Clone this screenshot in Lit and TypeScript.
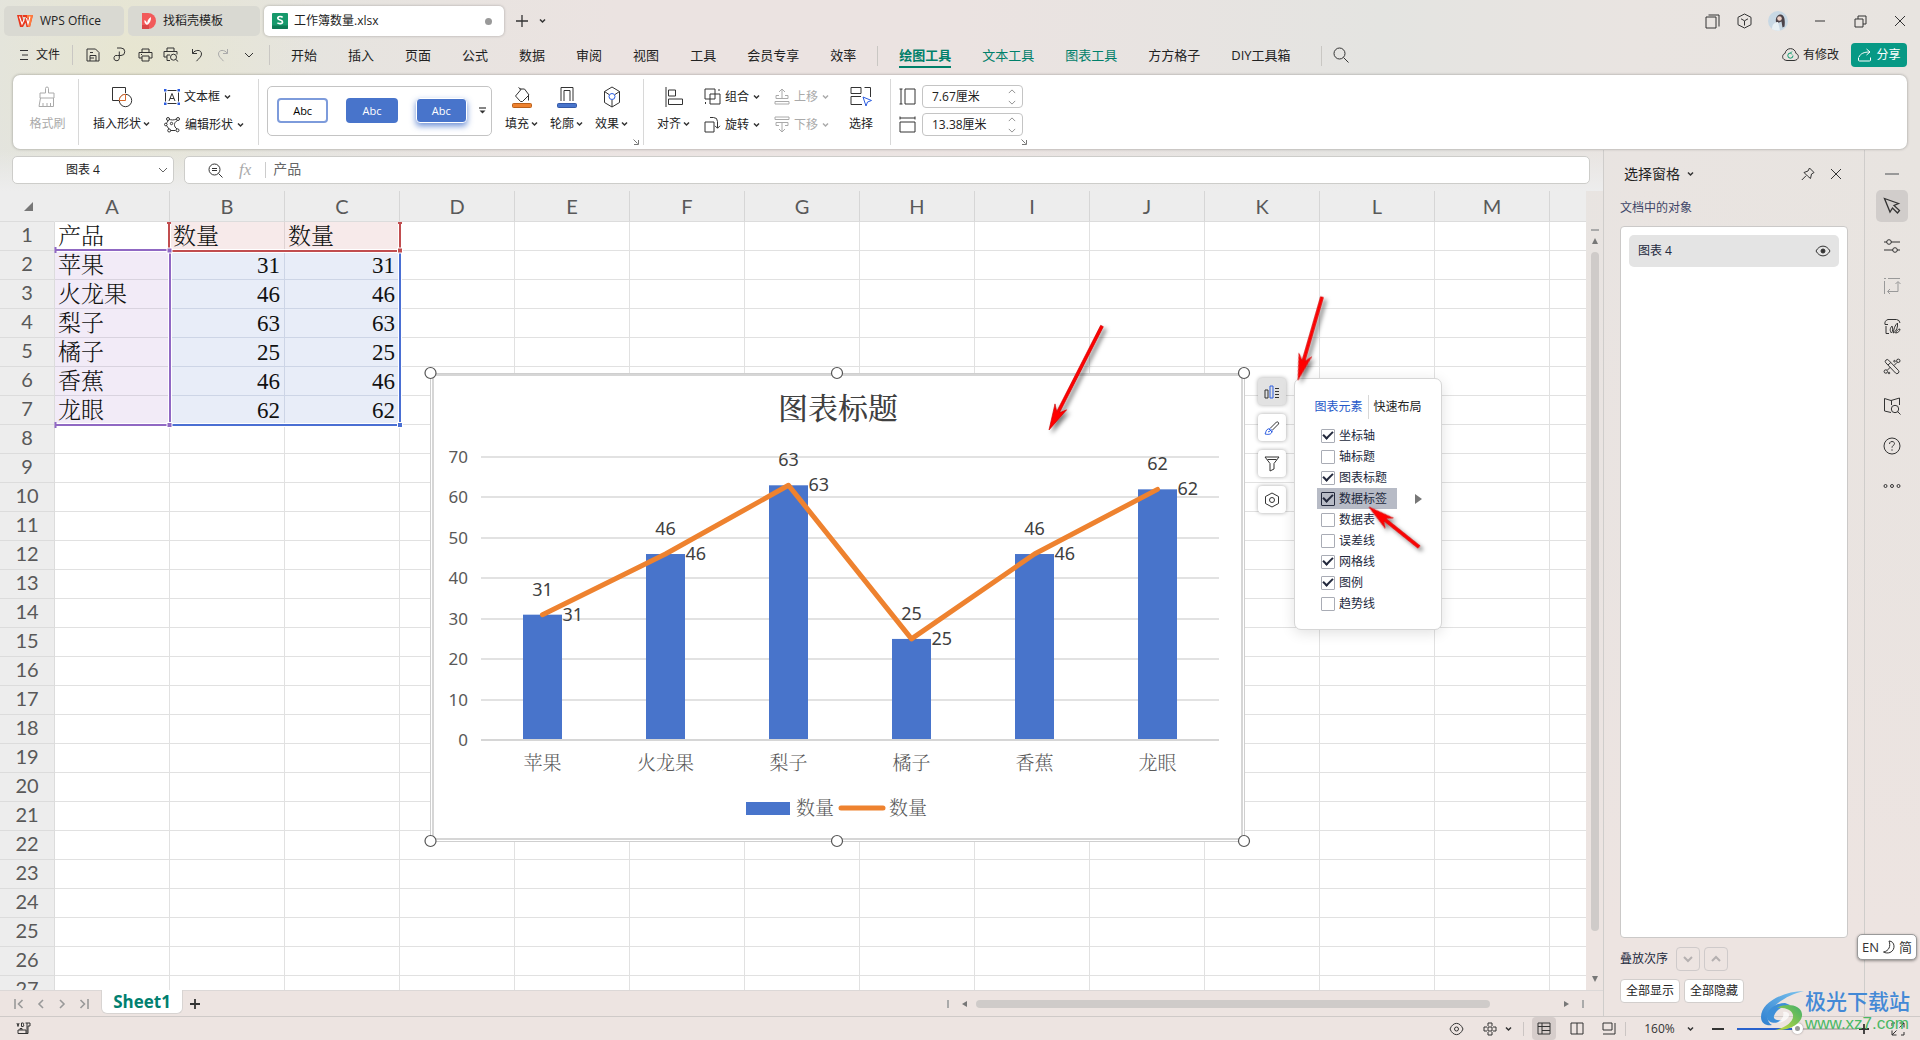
import { LitElement, html, css, svg, nothing } from "lit";
import { customElement, property, state } from "lit/decorators.js";
import { classMap } from "lit/directives/class-map.js";

const INK = "#333";

/* Line icons. Each entry: width, height, drawing. */
const ICONS: Record<string, [number, number, unknown]> = {
  wps: [16, 14, svg`<path d="M0 1h5l1.500 7L9 3H6L5.500 1H16l-3 12H9.500L8.500 8.500 6 13H3Z" fill="#e8391f"/><path d="M10 1h6l-3 12h-2l1.500-9H10Z" fill="#ff7b3d"/><path d="M2.500 2.500 5 10l2-4M9.500 4l1.500 6 2-7.500" stroke="#fff" stroke-width="1.100"/>`],
  docer: [15, 16, svg`<path d="M1 0h6a8 8 0 0 1 0 16H1Z" fill="#f25a5a"/><path d="M1 12h7v4H1Z" fill="#d94646"/><path d="M6 12c0-4 1-6 4-8 0 4-1 6-4 8Zm0 0c-2-1-3-3-2.500-5 2 1 3 3 2.500 5Z" fill="#fff"/>`],
  sheetfile: [16, 16, svg`<rect width="16" height="16" rx="1" fill="#16996b"/><path d="M0 12.500h16V15a1 1 0 0 1-1 1H1a1 1 0 0 1-1-1Z" fill="#0d7a54"/><path d="M10.600 4.400C9.800 3.300 5.800 2.900 5.800 5.200c0 2.300 4.700 1.300 4.700 3.700 0 2.300-4 2.100-5.100.9" stroke="#fff" stroke-width="1.700"/>`],
  plus: [14, 14, svg`<path d="M7 1v12M1 7h12" stroke-width="1.300"/>`],
  plusBold: [10, 10, svg`<path d="M5 0v10M0 5h10" stroke-width="1.800"/>`],
  caret: [7, 6, svg`<path d="m1 1.500 2.500 2.500L6 1.500" stroke-width="1.500"/>`],
  down: [10, 8, svg`<path d="m1 2 4 4 4-4"/>`],
  up: [10, 8, svg`<path d="m1 6 4-4 4 4"/>`],
  downBold: [10, 8, svg`<path d="m1 2 4 4 4-4" stroke-width="2"/>`],
  upBold: [10, 8, svg`<path d="m1 6 4-4 4 4" stroke-width="2"/>`],
  menu: [10, 12, svg`<path d="M1 1.500h8M3 6h6M1 10.500h8"/>`],
  save: [14, 14, svg`<path d="M1 1h8.500L13 4.500V13H1ZM4 13V7.500h6V13M4 4.500h3M4 10h4"/>`],
  loop: [14, 15, svg`<path d="M5 1h4a3.500 3.500 0 0 1 0 7.500H5.500a2.700 2.700 0 1 0 1.800 3V4.500"/>`],
  print: [15, 14, svg`<path d="M4 4V1h7v3M4 10H1V4.500h13V10h-3M4 8h7v5H4ZM3 6.500h1"/>`],
  preview: [16, 15, svg`<path d="M4 4V1h7v3M4 10H1V4.500h13v3M4 13.500h3M4 8v5.500M4 8h3"/><circle cx="10.500" cy="10.200" r="3"/><path d="m12.800 12.500 2.400 2"/>`],
  undo: [12, 14, svg`<path d="M1.500 1v4.500H6M1.700 5.300C4 1.500 10.500 1.200 10.500 6c0 3-3 4.500-5 7.200"/>`],
  redo: [12, 14, svg`<path d="M10.500 1v4.500H6M10.300 5.300C8 1.500 1.500 1.200 1.500 6c0 3 3 4.500 5 7.200"/>`],
  search: [16, 16, svg`<circle cx="6.500" cy="6.500" r="5.500"/><path d="m10.500 10.500 5 5"/>`],
  windows: [15, 15, svg`<path d="M1 3h10v11H1ZM3.500 1H14v11.500"/>`],
  cube: [15, 16, svg`<path d="M7.500 1 14 4.300v7.400L7.500 15 1 11.700V4.300ZM4 5.800l3.500 2L11 5.800M7.500 8v4.500"/>`],
  min: [10, 10, svg`<path d="M0 5h10"/>`],
  restore: [13, 13, svg`<path d="M1 4h8v8H1ZM4 4V1h8v8H9"/>`],
  close: [12, 12, svg`<path d="m1 1 10 10M11 1 1 11"/>`],
  cloud: [17, 15, svg`<path d="M5 13.500C-1 13 0 7 3 6.500 4 0 13 0 14 6.500c3 .5 4 6.500-2 7Z"/><path d="M11 8.500A2.600 2.600 0 1 1 8.500 6m0 0L10 4.500M8.500 6 10 7.500" stroke="#0a9a6c"/>`],
  share: [15, 14, svg`<path d="M9.500 1 13 4 9.500 7M12.800 4C7 4 3.500 5.500 2 9M1.500 9.500V12a1 1 0 0 0 1 1h10a1 1 0 0 0 1-1V9.500" stroke="#fff"/>`],
  brush: [20, 22, svg`<path d="M8.500 7V2.500a1.500 1.500 0 0 1 3 0V7H17v5H3V7ZM3.500 12 2 20.500h14.500V12M6 20.500V17M10 20.500V17M13.500 20.500V17" stroke="#aaa"/>`],
  shapes: [22, 22, svg`<path d="M8 14.500H1.500V1.500h13V7"/><circle cx="14.500" cy="14.500" r="6.200"/><path d="M14.500 8.300v6.200H8.300a6.200 6.200 0 0 1 6.200-6.200Z" stroke="#d9692b" fill="#fff"/>`],
  textbox: [16, 16, svg`<path d="M3.500 1.500h9M3.500 14.500h9M1.500 3.500v9M14.500 3.500v9M5 12 8 4.500 11 12M6 9.500h4"/><path d="M0 0h2.500v2.500H0ZM13.500 0H16v2.500h-2.500ZM0 13.500h2.500V16H0ZM13.500 13.500H16V16h-2.500Z" fill="#2b5ce0" stroke="none"/>`],
  editshape: [17, 17, svg`<path d="M5 3.200c2 1 5 1 7 0M4 5C3 6 3 7 2.200 7.700M2.500 9.500 5 13M6.500 14.500h5M13.500 4.500c-4 2-4 6-.5 8.500"/><circle cx="4" cy="3" r="1.500"/><circle cx="14" cy="3" r="1.500"/><circle cx="1.800" cy="8.500" r="1.300"/><circle cx="5.200" cy="14.500" r="1.500"/><circle cx="13.500" cy="14.300" r="1.500"/><circle cx="7.500" cy="7.500" r="1.200"/>`],
  fill: [20, 22, svg`<path d="M7.500 3h5l4.500 6-6.500 6.500H8.500L3.500 10 9 3.500 6.500 1.500M16.500 9.500v5"/><rect x=".5" y="17.500" width="19" height="4" rx="1" fill="#ee822f" stroke="#b9601c"/>`],
  outline: [20, 22, svg`<path d="M4 15V1.500h12V15M7 15V4.500h6V15"/><rect x=".5" y="17.500" width="19" height="4" rx="1" fill="#4874cb" stroke="#3559a6"/>`],
  effect: [18, 22, svg`<path d="m9 1 7.500 4.500v11L9 21l-7.500-4.500v-11ZM1.500 5.500 6 8.500M16.500 5.500 12 8.500M9 14v7"/><circle cx="9" cy="10.500" r="3" stroke="#2b5ce0"/>`],
  align: [18, 20, svg`<path d="M1 0v20M3.500 3h7v6h-7ZM3.500 12h14v5.500h-14Z"/>`],
  group: [17, 17, svg`<path d="M1 1h10v10H1ZM6 6h10v10H6ZM14 2h2M1.500 14v2"/>`],
  rotate: [17, 17, svg`<path d="M1 6h9v10H1ZM6 1.500h3.500a4 4 0 0 1 4 4V12M11 9.800l2.500 2.500L16 9.800"/>`],
  moveup: [16, 17, svg`<path d="M8 1v9M5 4l3-3 3 3M2 10.500V7.500h3M11 7.500h3v3H2M1 13.500h14V16H1Z" stroke="#aaa"/>`],
  movedown: [16, 17, svg`<path d="M8 7v9M5 13l3 3 3-3M5 9.500H2V6.500h12v3h-3M1 1h14v2.500H1Z" stroke="#aaa"/>`],
  select: [22, 21, svg`<path d="M1 7.500v-6h10v6H1ZM14.500 1.500h6V11M12 18.500H1v-8h10"/><path d="m13 11 8.500 3.500-4 1.500-1.500 4Z" stroke="#2b5ce0"/>`],
  heightIcon: [17, 17, svg`<path d="M2 1v15M.5 1h3M.5 16h3M6 1h10v15H6Z"/>`],
  widthIcon: [17, 17, svg`<path d="M1 2h15M1 .5v3M16 .5v3M1 6h15v10H1Z"/>`],
  launcher: [6, 6, svg`<path d="m.5.500 4 4M5.500 1v4.500H1"/>`],
  more: [7, 7, svg`<path d="M0 1h7" stroke-width="1.200"/><path d="m.5 3.500 3 3 3-3Z" fill="#333" stroke="none"/>`],
  zoomout: [15, 15, svg`<circle cx="6.500" cy="6.500" r="5.500"/><path d="m10.500 10.500 4 4M4 5.500h5M4 7.500h5"/>`],
  pin: [14, 14, svg`<path d="M8.500 1 13 5.500 10.500 7l-1 4.500L6.500 9 3 5.500 7 4ZM5 8.800.8 13"/>`],
  eye: [16, 12, svg`<path d="M1 6c3.500-6.500 10.500-6.500 14 0-3.500 6.500-10.500 6.500-14 0Z"/><circle cx="8" cy="6" r="2" fill="#333"/>`],
  dash: [14, 4, svg`<path d="M0 2h14" stroke="#999" stroke-width="2"/>`],
  pointer: [18, 18, svg`<path d="m1.500 1.500 14 5-4.500 2 5.500 5-2 2.500L9.500 11l-2.500 4Z" stroke-width="1.300"/>`],
  sliders: [18, 16, svg`<path d="M1 4h3M8 4h9M1 12h9M14 12h3"/><circle cx="6" cy="4" r="2.300"/><circle cx="12" cy="12" r="2.300"/>`],
  crop: [18, 18, svg`<path d="M1 1.500h2M5 1.500h12M1.500 4v13M15 5v9.500H5M12.500 7 15 4.500 17.500 7M7 12l-2.500 2.500L7 17" stroke="#999"/>`],
  style: [18, 17, svg`<path d="M5 6.500H2a4 4 0 0 1 3-5h8.500a4 4 0 0 1 3.500 3.500M3 8v7.500h3M8.500 15c-2-2-1.500-5 .5-7 1 3 1 5-.5 7Zm2 0c0-4 1.500-8 4-10 .500 4-1 8-4 10Zm2 0c1-2 2.500-4 4.500-4 0 2-2 4-4.500 4Z"/>`],
  tools: [18, 17, svg`<path d="M2.800 4.800 12.500 15a1.900 1.900 0 0 0 2.900-2.600L5.600 2.200a1.900 1.900 0 0 0-2.800 2.600ZM5 7l2.800-2.500M11 7.500l3.200-3.200M4.500 12l3-3"/><circle cx="15.300" cy="2.800" r="1.700"/><circle cx="2.800" cy="13.500" r="1.700"/><circle cx="11.500" cy="3.200" r=".8"/><circle cx="6" cy="15" r=".8"/>`],
  book: [18, 18, svg`<path d="M8 15.500 1.500 14V1.500L8 3.500 16.500 1v7M8.500 3.500V8"/><circle cx="12" cy="12" r="3.700"/><path d="m14.500 14.500 3 3"/>`],
  help: [18, 18, svg`<circle cx="9" cy="9" r="8"/><path d="M6.500 7c0-3.500 5-3 5-.5 0 2-2.500 1.800-2.500 4.200M9 12.300v1.400"/>`],
  dots: [18, 6, svg`<circle cx="2.500" cy="3" r="1.500"/><circle cx="9" cy="3" r="1.500"/><circle cx="15.500" cy="3" r="1.500"/>`],
  first: [10, 12, svg`<path d="M1 1v10M8.500 2 4.500 6l4 4" stroke="#999" stroke-width="1.600"/>`],
  prev: [8, 12, svg`<path d="M6 2 2 6l4 4" stroke="#999" stroke-width="1.600"/>`],
  next: [8, 12, svg`<path d="m2 2 4 4-4 4" stroke="#999" stroke-width="1.600"/>`],
  last: [10, 12, svg`<path d="M9 1v10M1.500 2l4 4-4 4" stroke="#999" stroke-width="1.600"/>`],
  macro: [15, 13, svg`<path d="M1 1l1 3.500L3 1M5.500 1v3.500H7c1 0 1-1.800 0-1.800 1 0 1-1.700 0-1.700ZM9.500 1H14v3h-2v7.500H2V8h8v3M4 8V6.500h2V8M11 1v10"/>`],
  chartEl: [16, 14, svg`<path d="M1 5h3v8H1ZM11 3.500h4M11 6.500h4M11 9.500h4M11 12.500h4"/><path d="M6 1h3v12H6Z" stroke="#2b5ce0"/>`],
  paint: [16, 16, svg`<path d="m6.500 8 6-6a1.500 1.500 0 0 1 2 2l-6 6"/><path d="M1 14c1-1 .500-4 3-5 2-1 5 1 4 3-1 3-5 2.500-7 2ZM5 9l3 3M4 12l2-1" stroke="#2b5ce0"/>`],
  funnel: [16, 16, svg`<path d="M1 1h14l-5 6.500V13l-4 2V7.500ZM3.500 3.500h9"/>`],
  gearhex: [16, 16, svg`<path d="m8 1 6.500 3.500v7L8 15l-6.500-3.500v-7Z"/><circle cx="8" cy="8" r="2.500"/>`],
  eyecare: [15, 14, svg`<path d="M1 7c3-7.500 10-7.500 13 0-3 7.500-10 7.500-13 0Z"/><circle cx="7.500" cy="7" r="2"/>`],
  flower: [14, 14, svg`<path d="M5 4V1h4v3M5 10v3h4v-3M4 5H1v4h3M10 5h3v4h-3M5 5h4v4H5Z"/>`],
  viewNormal: [14, 13, svg`<path d="M1 1h12v11H1ZM1 4.500h12M5 1v11M5 8.500h8"/>`],
  viewPage: [14, 13, svg`<path d="M1 1h12v11H1ZM7 1v11"/>`],
  viewBreak: [14, 13, svg`<path d="M1 1h9v7H1ZM13 1v11H1"/>`],
  full: [14, 14, svg`<path d="M8.500 1H13v4.500M13 1 8.500 5.500M5.500 13H1V8.500M1 13l4.500-4.500M1 4V1h3M13 10v3h-3"/>`],
  minus: [12, 4, svg`<path d="M0 2h12" stroke-width="2"/>`],
  moon: [14, 14, svg`<path d="M7 1c6 0 7 9 1 11.500-2 .8-5 .5-6.500-.5C7 11 9 6 7 1Z"/>`],
};

const icon = (name: string, stroke = INK) => {
  const [w, h, body] = ICONS[name];
  return html`<svg width=${w} height=${h} viewBox="0 0 ${w} ${h}" fill="none" stroke=${stroke} aria-hidden="true">${body}</svg>`;
};

const base = css`
  * { box-sizing: border-box; }
  svg { display: block; flex: none; }
  button, input, a {
    font: inherit; color: inherit; background: none; border: 0; padding: 0; margin: 0;
    text-decoration: none; outline: 0;
  }
  button { display: inline-flex; align-items: center; justify-content: center; white-space: nowrap; }
`;

@customElement("title-bar")
class TitleBar extends LitElement {
  static styles = [base, css`
    :host { display: flex; align-items: center; height: 38px; padding: 4px 0 0 4px; }
    .tab { height: 30px; border-radius: 5px; background: #d9d9d2; display: flex; align-items: center; gap: 7px; padding: 0 13px; margin-right: 4px; justify-content: flex-start; }
    .home { width: 120px; }
    .docer { width: 132px; }
    .doc { width: 240px; background: #fff; box-shadow: 0 0 3px rgba(0,0,0,.28); padding: 0 8px; gap: 6px; }
    .dot { width: 7px; height: 7px; border-radius: 50%; background: #999; margin-left: auto; margin-right: 4px; }
    .add { margin-left: 7px; gap: 10px; }
    .win { margin-left: auto; display: flex; align-items: center; }
    .win button { width: 40px; height: 28px; }
    .win .near { width: 32px; }
    .win .user { width: 32px; margin: 0 6px 0 2px; }
  `];
  render() {
    return html`
      <a class="tab home" href="#home">${icon("wps", "none")}<span>WPS Office</span></a>
      <a class="tab docer" href="#docer">${icon("docer", "none")}<span>找稻壳模板</span></a>
      <a class="tab doc" href="#doc">${icon("sheetfile", "none")}<span>工作簿数量.xlsx</span><span class="dot"></span></a>
      <button class="add" aria-label="新建">${icon("plus")}${icon("caret")}</button>
      <div class="win">
        <button class="near" aria-label="窗口">${icon("windows")}</button>
        <button class="near" aria-label="应用">${icon("cube")}</button>
        <button class="user" aria-label="账号">
          <svg width="20" height="20" viewBox="0 0 20 20"><circle cx="10" cy="10" r="10" fill="#c8d8e4"/><path d="M12 3.500c4 0 5.500 4 4.500 12l-2 1-1-6-5 2C7 10 8 4 12 3.500Z" fill="#4a4248"/><circle cx="11.500" cy="7.500" r="2.300" fill="#eccfc4"/><path d="M4 18c0-5 3-7 6-7l2 8.500c-3 .500-6 0-8-1.500Z" fill="#e8f0f4"/></svg>
        </button>
        <button aria-label="最小化">${icon("min")}</button>
        <button aria-label="还原">${icon("restore")}</button>
        <button aria-label="关闭">${icon("close")}</button>
      </div>`;
  }
}

@customElement("menu-bar")
class MenuBar extends LitElement {
  static styles = [base, css`
    :host { display: flex; align-items: center; height: 37px; padding: 0 13px 4px 19px; }
    .file { gap: 7px; }
    .sep { width: 1px; height: 20px; background: #c9c7c3; margin: 0 12px; }
    .quick { display: flex; margin: 0 -5px; }
    .quick button { width: 26px; height: 26px; }
    nav { display: flex; gap: 31px; font-size: 13px; margin: 3px 0 0 9px; align-items: center; }
    nav a { line-height: 22px; white-space: nowrap; border-bottom: 2px solid transparent; }
    nav .tool { color: #00806a; }
    nav .on { font-weight: 700; border-color: #00806a; }
    nav .bar { width: 1px; height: 20px; background: #c9c7c3; margin: 0 -10px; }
    nav .bar:last-child { margin-left: -1px; }
    .find { margin-left: 21px; }
    .right { margin-left: auto; display: flex; align-items: center; gap: 12px; }
    .sync { gap: 4px; }
    .share { height: 24px; width: 56px; border-radius: 4px; background: #079985; color: #fff; gap: 4px; }
  `];
  render() {
    const main = ["开始", "插入", "页面", "公式", "数据", "审阅", "视图", "工具", "会员专享", "效率"];
    return html`
      <button class="file">${icon("menu")}<span>文件</span></button>
      <span class="sep"></span>
      <div class="quick">
        ${["save", "loop", "print", "preview", "undo"].map((n) => html`<button aria-label=${n}>${icon(n)}</button>`)}
        <button aria-label="redo">${icon("redo", "#aaa")}</button>
        <button aria-label="more">${icon("down")}</button>
      </div>
      <span class="sep"></span>
      <nav>
        ${main.map((t) => html`<a href="#tab">${t}</a>`)}
        <span class="bar"></span>
        <a class="tool on" href="#tab">绘图工具</a>
        <a class="tool" href="#tab">文本工具</a>
        <a class="tool" href="#tab">图表工具</a>
        <a href="#tab">方方格子</a>
        <a href="#tab">DIY工具箱</a>
        <span class="bar"></span>
      </nav>
      <button class="find" aria-label="搜索">${icon("search")}</button>
      <div class="right">
        <button class="sync">${icon("cloud")}<span>有修改</span></button>
        <button class="share">${icon("share")}<span>分享</span></button>
      </div>`;
  }
}

@customElement("ribbon-bar")
class RibbonBar extends LitElement {
  static styles = [base, css`
    :host { display: flex; height: 74px; margin: 0 13px 1px; background: #fff; border-radius: 7px; box-shadow: 0 0 3px rgba(0,0,0,.35); position: relative; z-index: 2; padding: 4px 0; }
    .group { display: flex; align-items: center; position: relative; border-right: 1px solid #d8d8d8; padding: 0 10px 3px; }
    .group:last-child { border: 0; }
    .big { flex-direction: column; gap: 6px; height: 56px; justify-content: flex-start; padding-top: 3px; }
    .big .pic { height: 22px; display: flex; align-items: center; }
    .lbl { display: flex; align-items: center; gap: 2px; line-height: 20px; }
    .stack { display: flex; flex-direction: column; gap: 8px; }
    .stack button { height: 20px; gap: 4px; justify-content: flex-start; }
    .off { color: #aaa; }
    .g1 { width: 66px; justify-content: center; padding-left: 14px; }
    .g2 { width: 180px; gap: 14px; padding-left: 14px; }
    .g3 { width: 385px; gap: 12px; padding-left: 8px; padding-right: 0; }
    .g4 { width: 247px; gap: 14px; padding-left: 13px; }
    .g5 { width: 140px; gap: 6px; padding-left: 8px; }
    .pick { margin-left: 6px; }
    .gallery { display: flex; align-items: center; width: 225px; height: 50px; border: 1px solid #c4c4c4; border-radius: 5px; padding: 0 5px 0 9px; gap: 18px; margin-right: 1px; font-size: 11px; }
    .sample { width: 52px; height: 25px; border-radius: 4px; background: #4874cb; color: #fff; }
    .gallery .plain { background: #fff; color: #000; border: 2px solid #7d9bdb; }
    .gallery .raised { border: 1px solid #fff; box-shadow: 0 3px 6px rgba(72,116,203,.8); }
    .gallery .more { margin-left: -6px; }
    .corner { position: absolute; right: 4px; bottom: 0; }
    .sizes { display: flex; flex-direction: column; gap: 5px; }
    .sizes label { display: flex; align-items: center; gap: 6px; }
    .num { display: flex; align-items: center; width: 101px; height: 23px; border: 1px solid #c4c4c4; border-radius: 4px; padding: 0 4px 0 9px; }
    .num input { width: 76px; font-size: 12px; }
    .spin { display: flex; flex-direction: column; gap: 4px; }
    .spin svg { width: 8px; height: 7px; }
  `];
  big(name: string, text: string, caret = true, extra = "") {
    return html`<button class="big ${extra}"><span class="pic">${icon(name)}</span><span class="lbl">${text}${caret ? icon("caret") : nothing}</span></button>`;
  }
  row(name: string, text: string, off = false) {
    return html`<button class=${off ? "off" : ""}>${icon(name)}<span>${text}</span>${icon("caret", off ? "#aaa" : INK)}</button>`;
  }
  size(name: string, text: string, value: string) {
    return html`<label>${icon(name)}<span class="num"><input aria-label=${text} .value=${value} /><span class="spin">${icon("up", "#777")}${icon("down", "#777")}</span></span></label>`;
  }
  render() {
    return html`
      <div class="group g1">${this.big("brush", "格式刷", false, "off")}</div>
      <div class="group g2">
        ${this.big("shapes", "插入形状")}
        <div class="stack">${this.row("textbox", "文本框")}${this.row("editshape", "编辑形状")}</div>
      </div>
      <div class="group g3">
        <div class="gallery">
          <button class="sample plain">Abc</button><button class="sample">Abc</button><button class="sample raised">Abc</button>
          <button class="more" aria-label="更多样式">${icon("more")}</button>
        </div>
        ${this.big("fill", "填充")}${this.big("outline", "轮廓")}${this.big("effect", "效果")}
        <span class="corner">${icon("launcher", "#777")}</span>
      </div>
      <div class="group g4">
        ${this.big("align", "对齐")}
        <div class="stack">${this.row("group", "组合")}${this.row("rotate", "旋转")}</div>
        <div class="stack">${this.row("moveup", "上移", true)}${this.row("movedown", "下移", true)}</div>
        ${this.big("select", "选择", false, "pick")}
      </div>
      <div class="group g5">
        <div class="sizes">${this.size("heightIcon", "高度", "7.67厘米")}${this.size("widthIcon", "宽度", "13.38厘米")}</div>
        <span class="corner">${icon("launcher", "#777")}</span>
      </div>`;
  }
}

const CATEGORIES = ["苹果", "火龙果", "梨子", "橘子", "香蕉", "龙眼"];
const VALUES = [31, 46, 63, 25, 46, 62];

@customElement("chart-object")
class ChartObject extends LitElement {
  static styles = [base, css`
    :host { display: block; }
    text { font-family: "Noto Sans", "Open Sans", "Noto Sans CJK SC", sans-serif; fill: #404040; }
    .title { font-family: "Noto Serif CJK SC", "Noto Sans CJK SC", serif; font-size: 30px; font-weight: 500; text-anchor: middle; }
    .axis { font-size: 17px; fill: #595959; text-anchor: end; }
    .cat { font-family: "Noto Serif CJK SC", "Noto Sans CJK SC", serif; font-size: 19px; font-weight: 300; fill: #595959; text-anchor: middle; }
    .key { font-family: "Noto Serif CJK SC", "Noto Sans CJK SC", serif; font-size: 19px; font-weight: 300; fill: #595959; }
    .val { font-size: 18px; }
    .mid { text-anchor: middle; }
  `];
  render() {
    const left = 61, right = 799, bottom = 377, unit = 283 / 70, step = 123;
    const x = (i: number) => left + step * i + step / 2;
    const y = (v: number) => bottom - v * unit;
    return html`<svg width="836" height="490" viewBox="0 0 836 490" role="img" aria-label="图表标题">
      <rect x="10.500" y="10.500" width="814" height="468" fill="#fff" stroke="#cfcfcf" />
      <rect x="13" y="12" width="809" height="464" fill="#fff" stroke="#d6d6d6" stroke-width="2" />
      ${[0, 10, 20, 30, 40, 50, 60, 70].map((t) => svg`
        <line x1=${left} x2=${right} y1=${Math.round(y(t))} y2=${Math.round(y(t))} stroke=${t ? "#e2e2e2" : "#d6d6d6"} stroke-width="2" />
        <text class="axis" x="48" y=${Math.round(y(t)) + 6}>${t}</text>`)}
      ${VALUES.map((v, i) => svg`
        <rect x=${x(i) - 19.5} y=${y(v)} width="39" height=${bottom - 1 - y(v)} fill="#4874cb" />
        <text class="cat" x=${x(i)} y=${bottom + 30}>${CATEGORIES[i]}</text>`)}
      <polyline points=${VALUES.map((v, i) => `${x(i)},${y(v)}`).join(" ")} fill="none" stroke="#ee822f" stroke-width="5" stroke-linecap="round" stroke-linejoin="round" />
      ${VALUES.map((v, i) => svg`
        <text class="val mid" x=${x(i)} y=${y(v) - 19}>${v}</text>
        <text class="val" x=${x(i) + 20} y=${y(v) + 6}>${v}</text>`)}
      <text class="title" x="418" y="56">图表标题</text>
      <rect x="326" y="439" width="44" height="13" fill="#4874cb" />
      <text class="key" x="376" y="452">数量</text>
      <line x1="421" x2="463" y1="445" y2="445" stroke="#ee822f" stroke-width="5" stroke-linecap="round" />
      <text class="key" x="469" y="452">数量</text>
      ${[10, 478].map((cy) => [10.5, 417, 824].map((cx) => svg`<circle cx=${cx} cy=${cy} r="5.500" fill="#fff" stroke="#555" stroke-width="1.200" />`))}
    </svg>`;
  }
}

@customElement("chart-tools")
class ChartTools extends LitElement {
  static styles = [base, css`
    :host { display: flex; align-items: flex-start; gap: 8px; }
    .strip { display: flex; flex-direction: column; gap: 9px; }
    .strip button { width: 28px; height: 27px; border-radius: 4px; background: #fff; box-shadow: 0 0 4px rgba(0,0,0,.35); }
    .strip .on { background: #e2e2e2; }
    .panel { width: 148px; background: #fff; border: 1px solid #d6d6d6; border-radius: 7px; box-shadow: 0 3px 14px rgba(0,0,0,.12); padding: 16px 0 15px; }
    .tabs { display: flex; justify-content: center; height: 24px; margin-bottom: 6px; }
    .tabs button { padding: 0 5px; }
    .tabs .on { color: #2458c9; border-right: 1px solid #d8d8d8; }
    ul { list-style: none; margin: 0; padding: 0; }
    li { display: flex; align-items: center; height: 21px; padding-left: 22px; }
    label { display: flex; align-items: center; height: 21px; gap: 4px; padding: 0 10px 0 4px; color: #23293d; }
    .hot { background: #b7bbc6; }
    input { appearance: none; width: 14px; height: 14px; border: 1px solid #a9acb5; border-radius: 1px; background: #fff; display: grid; place-items: center; }
    .hot input { border-color: #23293d; background: #b7bbc6; }
    input:checked::after { content: ""; width: 8px; height: 4px; border: solid #23293d; border-width: 0 0 2px 2px; transform: rotate(-45deg); margin-bottom: 3px; }
    .tri { margin-left: 18px; border: solid transparent; border-width: 5px 0 5px 7px; border-left-color: #777; }
  `];
  @state() items: [string, boolean][] = [["坐标轴", true], ["轴标题", false], ["图表标题", true], ["数据标签", true], ["数据表", false], ["误差线", false], ["网格线", true], ["图例", true], ["趋势线", false]];
  render() {
    return html`
      <div class="strip">
        <button class="on" aria-label="图表元素">${icon("chartEl")}</button>
        <button aria-label="图表样式">${icon("paint")}</button>
        <button aria-label="图表筛选器">${icon("funnel")}</button>
        <button aria-label="设置图表区域格式">${icon("gearhex")}</button>
      </div>
      <div class="panel">
        <div class="tabs"><button class="on">图表元素</button><button>快速布局</button></div>
        <ul>${this.items.map(([name, on], i) => html`<li>
          <label class=${classMap({ hot: i === 3 })}><input type="checkbox" .checked=${on} /><span>${name}</span></label>
          ${i === 3 ? html`<span class="tri"></span>` : nothing}</li>`)}</ul>
      </div>`;
  }
}

@customElement("sheet-grid")
class SheetGrid extends LitElement {
  static styles = [base, css`
    :host { display: block; position: relative; overflow: hidden; background: #ededed; }
    table { border-collapse: separate; border-spacing: 0; table-layout: fixed; width: 1665px; background: #fff; }
    .corner-col { width: 55px; }
    .data-col { width: 115px; }
    th { font: 400 20px/24px Lato, sans-serif; color: #595959; background: #ededed; padding: 0; border: solid #dcdcdc; border-width: 0 1px 1px 0; }
    thead th { height: 31px; border-right-color: #d6d6d6; }
    thead .corner { border-right-color: #ededed; }
    thead .last { border-right: 0; }
    tbody th { height: 29px; padding-bottom: 4px; }
    td { font: 23px/27px "Liberation Serif", "Noto Serif CJK SC", "Noto Sans CJK SC", serif; color: #111; height: 29px; padding: 0 4px 0 3px; border: solid #e1e1e1; border-width: 0 1px 1px 0; overflow: hidden; white-space: nowrap; }
    .cn { font-weight: 300; }
    .num { text-align: right; }
    .red { background: #f7eaea; border-color: #dfd3d3; }
    .purple { background: #f2ebf7; border-color: #d9d3df; }
    .blue { background: #e8edf8; border-color: #cdd5e6; }
    .tri { display: block; width: 0; margin: 0 0 0 24px; border: solid transparent; border-width: 0 0 9px 9px; border-bottom-color: #777; }
    .ranges { position: absolute; left: 0; top: 0; }
    .chart { position: absolute; left: 420px; top: 172px; }
    .tools { position: absolute; left: 1258px; top: 187px; }
    .arrows { position: absolute; left: 1030px; top: 89px; pointer-events: none; }
  `];
  cell(r: number, c: number) {
    if (r > 6 || c > 2) return html`<td></td>`;
    if (r === 0) return html`<td class=${c ? "cn red" : "cn"}>${c ? "数量" : "产品"}</td>`;
    return c ? html`<td class="num blue">${VALUES[r - 1]}</td>` : html`<td class="cn purple">${CATEGORIES[r - 1]}</td>`;
  }
  arrow(x1: number, y1: number, x2: number, y2: number) {
    const len = Math.hypot(x2 - x1, y2 - y1);
    const ang = (Math.atan2(y2 - y1, x2 - x1) * 180) / Math.PI;
    return svg`<path transform="translate(${x1} ${y1}) rotate(${ang})" d="M0 -1.500 L${len - 20} -1.500 L${len - 26} -6.500 L${len} 0 L${len - 26} 6.500 L${len - 20} 1.500 L0 1.500 Z" fill="#f00" stroke="#c00" stroke-width=".6" />`;
  }
  render() {
    const cols = [..."ABCDEFGHIJKLM", ""];
    const edge = (d: string, c: string) => svg`<path d=${d} stroke="#fff" stroke-width="4" /><path d=${d} stroke=${c} stroke-width="2" />`;
    const knob = (x: number, y: number, c: string) => svg`<rect x=${x - 2.5} y=${y - 2.5} width="5" height="5" fill=${c} stroke="#fff" />`;
    return html`
      <table>
        <colgroup><col class="corner-col" />${cols.map(() => html`<col class="data-col" />`)}</colgroup>
        <thead><tr><th class="corner" aria-label="全选"><span class="tri"></span></th>${cols.map((c) => html`<th class=${c ? "" : "last"}>${c}</th>`)}</tr></thead>
        <tbody>${Array.from({ length: 27 }, (_, r) => html`<tr><th>${r + 1}</th>${cols.map((_c, c) => this.cell(r, c))}</tr>`)}</tbody>
      </table>
      <svg class="ranges" width="406" height="240" viewBox="0 0 406 240" fill="none">
        ${edge("M400 60V234H170", "#4a6fd3")}
        ${edge("M169 32V60H400V32", "#c14d4f")}
        ${edge("M56 59H170V234H56", "#9068c3")}
        <path d="M55.500 56v6M55.500 231v6" stroke="#9068c3" stroke-width="2" />
        <path d="M167 32h4M398 32h4" stroke="#c14d4f" stroke-width="2" />
        ${knob(169.5, 59.5, "#9068c3")}${knob(169.5, 234, "#9068c3")}${knob(400, 59.5, "#c14d4f")}${knob(400, 234, "#4a6fd3")}
      </svg>
      <chart-object class="chart"></chart-object>
      <chart-tools class="tools"></chart-tools>
      <svg class="arrows" width="410" height="290" viewBox="0 0 410 290">
        <defs><filter id="s" x="-40%" y="-40%" width="180%" height="180%"><feDropShadow dx="3" dy="3" stdDeviation="2" flood-opacity=".5" /></filter></defs>
        <g filter="url(#s)">
          ${this.arrow(72, 46, 19, 150)}${this.arrow(292, 17, 268, 100)}${this.arrow(389, 267, 339, 227)}
        </g>
      </svg>`;
  }
}

@customElement("side-pane")
class SidePane extends LitElement {
  static styles = [base, css`
    :host { display: flex; flex-direction: column; width: 261px; border-left: 1px solid #cfcdcb; padding: 14px 16px 13px; }
    header { display: flex; align-items: center; height: 20px; padding-left: 4px; font-size: 14px; }
    header .name { gap: 7px; }
    header .pin { margin-left: auto; margin-right: 15px; }
    header .x { margin-right: 6px; }
    .sub { color: #3f4668; line-height: 18px; margin: 15px 0 9px; }
    .list { flex: 1; background: #fff; border: 1px solid #cbc9c8; border-radius: 4px; padding: 8px; margin: 0; list-style: none; }
    .list li { display: flex; align-items: center; justify-content: space-between; height: 32px; background: #e4e4e4; border-radius: 5px; padding: 0 8px 0 9px; color: #23293d; }
    .order, .all { display: flex; align-items: center; gap: 4px; }
    .order { margin: 9px 0 8px; color: #23293d; }
    .order span { margin-right: 4px; }
    .order button { width: 24px; height: 24px; border: 1px solid #cfcaca; border-radius: 4px; }
    .all button { width: 60px; height: 24px; background: #fff; border: 1px solid #d2cecc; border-radius: 4px; color: #222; }
  `];
  render() {
    return html`
      <header><button class="name"><span>选择窗格</span>${icon("caret")}</button>
        <button class="pin" aria-label="固定">${icon("pin")}</button><button class="x" aria-label="关闭">${icon("close")}</button></header>
      <div class="sub">文档中的对象</div>
      <ul class="list"><li><span>图表 4</span><button aria-label="可见">${icon("eye")}</button></li></ul>
      <div class="order"><span>叠放次序</span><button aria-label="下移一层">${icon("downBold", "#b5b0b0")}</button><button aria-label="上移一层">${icon("upBold", "#b5b0b0")}</button></div>
      <div class="all"><button>全部显示</button><button>全部隐藏</button></div>`;
  }
}

@customElement("side-rail")
class SideRail extends LitElement {
  static styles = [base, css`
    :host { display: flex; flex-direction: column; align-items: center; width: 56px; border-left: 1px solid #cfcdcb; padding: 16px 2px 0 0; }
    button { width: 32px; height: 32px; border-radius: 5px; margin-bottom: 8px; }
    .fold { height: 16px; }
    .on { background: #d1cdcb; }
  `];
  render() {
    return html`<button class="fold" aria-label="收起">${icon("dash")}</button>
      ${["pointer", "sliders", "crop", "style", "tools", "book", "help", "dots"].map((n, i) => html`<button class=${i ? "" : "on"} aria-label=${n}>${icon(n)}</button>`)}`;
  }
}

@customElement("status-bar")
class StatusBar extends LitElement {
  static styles = [base, css`
    :host { display: flex; align-items: center; height: 24px; border-top: 1px solid #cfcac8; padding: 0 6px 0 16px; }
    .end { margin-left: auto; display: flex; align-items: center; }
    .end button { height: 23px; width: 32px; }
    .end .flower { gap: 8px; margin: 0 10px 0 9px; }
    .sep { width: 1px; height: 14px; background: #cbc5c3; }
    .end .on { background: #d6cdcb; border-radius: 4px; width: 24px; margin: 0 5px 0 8px; }
    .zoom { font-size: 12px; gap: 12px; color: #333; }
    .end .zoom { width: 60px; margin: 0 9px 0 13px; }
    .end .step { width: 20px; }
    .end .plus { width: 14px; }
    input { appearance: none; width: 120px; height: 16px; margin: 0 0 0 9px; }
    input::-webkit-slider-runnable-track { height: 2px; background: linear-gradient(90deg, #2a62cc 50%, #c0b9b7 50%); }
    input::-webkit-slider-thumb { appearance: none; width: 11px; height: 11px; margin-top: -5px; border-radius: 50%; background: #999; border: 3px solid #fff; box-shadow: 0 0 2px rgba(0,0,0,.4); }
    .end .full { margin-left: 11px; }
  `];
  render() {
    return html`<button aria-label="宏">${icon("macro")}</button>
      <div class="end">
        <button aria-label="护眼">${icon("eyecare")}</button>
        <button class="flower" aria-label="聚光灯">${icon("flower")}${icon("caret")}</button>
        <span class="sep"></span>
        <button class="on" aria-label="普通视图">${icon("viewNormal")}</button>
        <button aria-label="页面布局">${icon("viewPage")}</button>
        <button aria-label="分页预览">${icon("viewBreak")}</button>
        <span class="sep"></span>
        <button class="zoom">160%${icon("caret")}</button>
        <button class="step" aria-label="缩小">${icon("minus")}</button>
        <input type="range" aria-label="缩放" min="0" max="100" .value=${"50"} />
        <button class="step plus" aria-label="放大">${icon("plusBold")}</button>
        <button class="full" aria-label="全屏">${icon("full")}</button>
      </div>`;
  }
}

@customElement("app-root")
class AppRoot extends LitElement {
  @property() sheet = "Sheet1";
  static styles = [base, css`
    :host {
      display: flex; flex-direction: column; height: 100vh; position: relative; overflow: hidden;
      font: 12px/18px "Open Sans", "Noto Sans CJK SC", sans-serif; color: #222;
      background:
        radial-gradient(circle at 7% 5%, rgba(232,230,205,.8), transparent 9%),
        linear-gradient(90deg, #e3e4df 0%, #e5e4df 14%, #ebe3e1 32%, #ebe3e1 50%, #e4e4e1 72%, #e9e4e1 85%, #e8e4e0 100%);
    }
    .body { display: flex; flex: 1; min-height: 0; background: linear-gradient(180deg, transparent 0, rgba(236,227,225,.4) 50%, #ede4e1 90%); }
    status-bar { background: #ede4e1; }
    .work { flex: 1; min-width: 0; display: flex; flex-direction: column; }
    .formula { display: flex; gap: 10px; padding: 6px 13px 8px 12px; height: 41px; background: linear-gradient(180deg, transparent, #ededed); }
    .name, .expr { display: flex; align-items: center; background: #fff; border: 1px solid #cdcdca; border-radius: 5px; height: 28px; }
    .name { width: 162px; padding: 0 5px; }
    .name input { flex: 1; min-width: 0; text-align: center; padding-right: 10px; font-size: 12px; }
    .expr { flex: 1; padding: 0 8px 0 23px; }
    .fx { font: italic 17px/20px "Liberation Serif", serif; color: #aaa; margin-left: 16px; }
    .expr input { flex: 1; font-size: 14px; color: #666; border-left: 1px solid #ccc; margin-left: 14px; padding: 0 0 2px 7px; height: 16px; }
    .view { display: flex; flex: 1; min-height: 0; }
    sheet-grid { flex: 1; min-width: 0; }
    .vscroll { width: 17px; margin-top: 31px; display: flex; flex-direction: column; align-items: center; gap: 7px; padding: 7px 0 8px; }
    .vscroll .thumb { width: 8px; flex: 1; background: #cfcbc9; border-radius: 4px; margin: 1px 0 38px; }
    .tick { width: 8px; height: 2px; background: #aaa; }
    .aup, .adn { border: solid transparent; border-width: 0 3px 6px; border-bottom-color: #777; }
    .adn { border-width: 6px 3px 0; border-top-color: #777; }
    .bottom { display: flex; align-items: center; height: 26px; border-top: 1px solid #dcd8d7; padding-left: 14px; }
    .nav { display: flex; gap: 13px; }
    .sheet { align-self: flex-start; height: 24px; width: 82px; margin: -1px 7px 0 12px; background: #fff; color: #008070; font-weight: 700; font-size: 17px; border-radius: 0 0 6px 6px; border: 1px solid #d8d4d2; border-top: 0; display: grid; place-items: center; }
    .hscroll { margin-left: auto; width: 656px; display: flex; align-items: center; gap: 13px; }
    .hscroll .thumb { width: 514px; height: 8px; background: #cfcbc9; border-radius: 4px; margin-left: -4px; }
    .vt { width: 2px; height: 8px; background: #aaa; }
    .al, .ar { border: solid transparent; border-width: 3px 5px 3px 0; border-right-color: #777; }
    .ar { border-width: 3px 0 3px 5px; border-left-color: #777; margin-left: auto; }
    .hscroll .vt:last-child { margin-right: 19px; }
    .ime { position: absolute; right: 3px; bottom: 80px; height: 26px; display: flex; align-items: center; gap: 3px; padding: 0 4px; background: #fff; border: 1px solid #999; border-radius: 5px; box-shadow: 0 1px 3px rgba(0,0,0,.4); font-size: 13px; color: #333; }
    .mark { position: absolute; right: 10px; bottom: 7px; display: flex; align-items: center; pointer-events: none; }
    .mark svg { margin-right: 1px; }
    .mark div { display: flex; flex-direction: column; gap: 4px; }
    .mark b { font: 500 21px/22px "Noto Sans CJK SC", sans-serif; color: #4389d6; }
    .mark i { font: 500 17px/18px "Liberation Sans", sans-serif; color: #4bb865; }
  `];
  render() {
    return html`
      <title-bar></title-bar>
      <menu-bar></menu-bar>
      <ribbon-bar></ribbon-bar>
      <div class="body">
        <div class="work">
          <div class="formula">
            <div class="name"><input aria-label="名称框" .value=${"图表 4"} /><button aria-label="展开">${icon("down", "#666")}</button></div>
            <div class="expr"><button aria-label="查找">${icon("zoomout")}</button><span class="fx">fx</span><input aria-label="编辑栏" .value=${"产品"} /></div>
          </div>
          <div class="view">
            <sheet-grid></sheet-grid>
            <div class="vscroll"><span class="tick"></span><span class="aup"></span><span class="thumb"></span><span class="adn"></span></div>
          </div>
          <div class="bottom">
            <div class="nav">${["first", "prev", "next", "last"].map((n) => html`<button aria-label=${n}>${icon(n)}</button>`)}</div>
            <a class="sheet" href="#sheet1">${this.sheet}</a>
            <button aria-label="新建工作表">${icon("plusBold")}</button>
            <div class="hscroll"><span class="vt"></span><span class="al"></span><span class="thumb"></span><span class="ar"></span><span class="vt"></span></div>
          </div>
        </div>
        <side-pane></side-pane>
        <side-rail></side-rail>
      </div>
      <status-bar></status-bar>
      <div class="ime"><span>EN</span>${icon("moon")}<span>简</span></div>
      <div class="mark">
        <svg width="43" height="42" viewBox="0 0 43 42">
          <defs><linearGradient id="b" x1="0" y1="1" x2="1" y2="0"><stop offset="0" stop-color="#2f7fd0"/><stop offset="1" stop-color="#7cc4ee"/></linearGradient>
          <linearGradient id="g" x1="0" y1="1" x2="1" y2="0"><stop offset="0" stop-color="#c8dc3c"/><stop offset="1" stop-color="#3fae6a"/></linearGradient></defs>
          <path d="M43 1C24 1 0 12 0 27c0 7 6 9 11 8-5-3-6-8-1-15C17 11 30 4 43 1Z" fill="url(#b)"/>
          <path d="M24 13c-10 0-18 7-18 14 0 6 10 8 15 3-6 1-9-1-8-4 2-6 8-10 16-11Z" fill="#3e8fd8"/>
          <path d="M16 18c8-5 24-4 25 6 1 9-12 17-27 16 10-2 19-8 18-15-1-5-8-8-16-7Z" fill="url(#g)"/>
          <path d="M22 22c6-1 8 3 4 7-3 3-8 4-11 4 4-2 9-6 7-11Z" fill="#fff" opacity=".7"/>
        </svg>
        <div><b>极光下载站</b><i>www.xz7.com</i></div>
      </div>`;
  }
}
